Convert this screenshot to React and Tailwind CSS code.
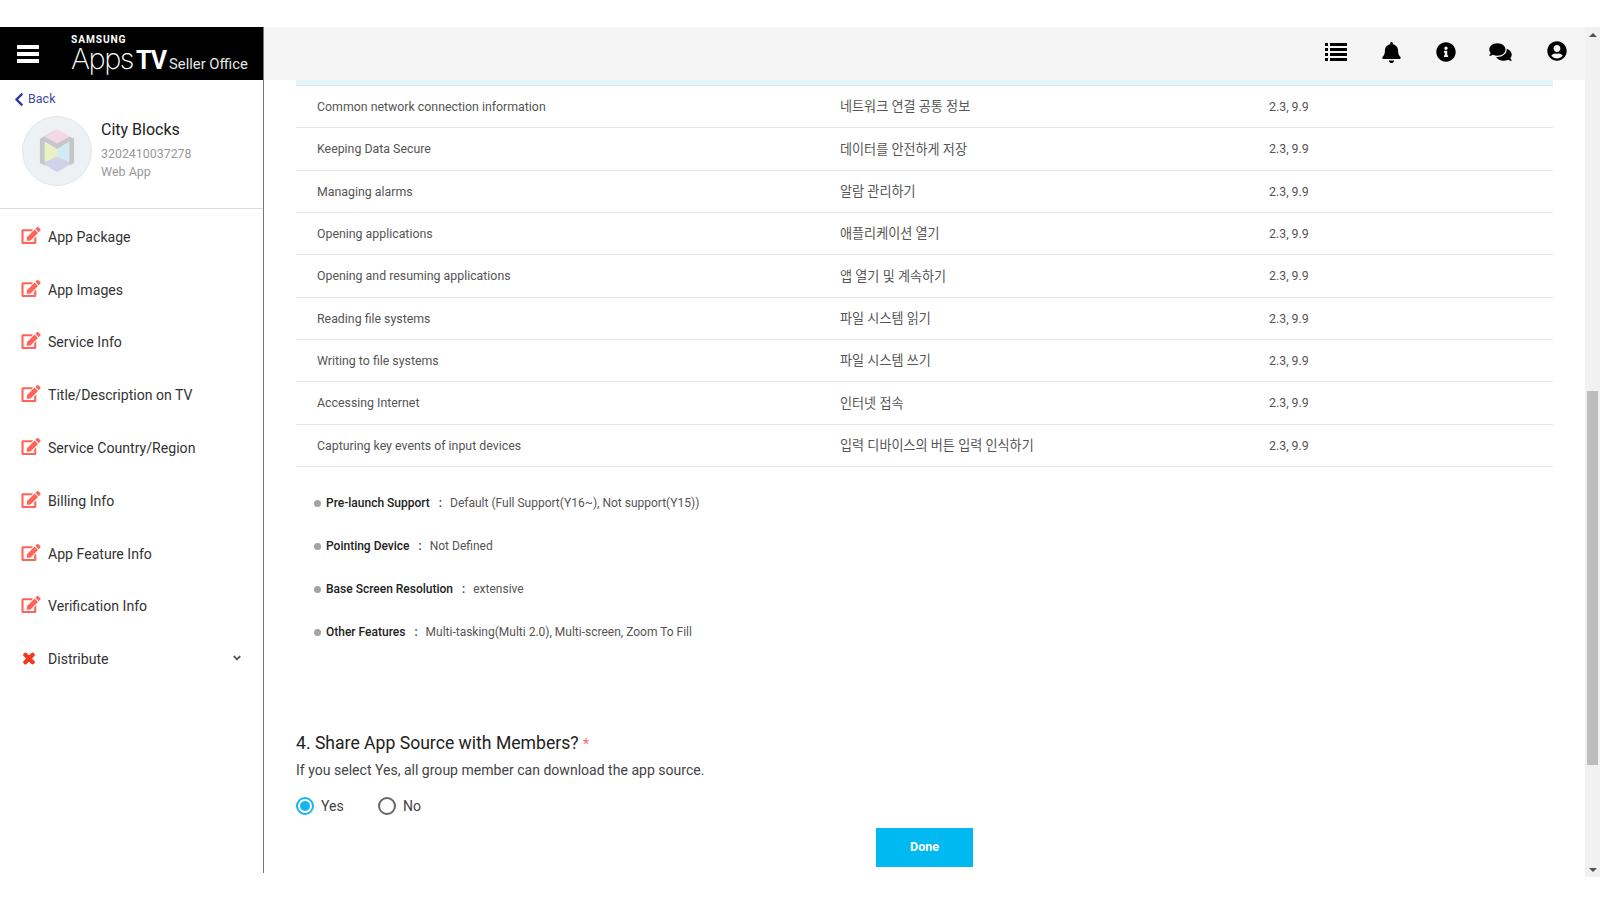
import React from 'react'
import {
    FaBell,
    FaChevronLeft,
    FaComments,
    FaEdit,
    FaInfoCircle,
    FaTimes,
    FaUserCircle,
    FaAngleDown,
} from 'react-icons/fa'

const menuItems = [
    'App Package',
    'App Images',
    'Service Info',
    'Title/Description on TV',
    'Service Country/Region',
    'Billing Info',
    'App Feature Info',
    'Verification Info',
]

const rows = [
    ['Common network connection information', '네트워크 연결 공통 정보'],
    ['Keeping Data Secure', '데이터를 안전하게 저장'],
    ['Managing alarms', '알람 관리하기'],
    ['Opening applications', '애플리케이션 열기'],
    ['Opening and resuming applications', '앱 열기 및 계속하기'],
    ['Reading file systems', '파일 시스템 읽기'],
    ['Writing to file systems', '파일 시스템 쓰기'],
    ['Accessing Internet', '인터넷 접속'],
    ['Capturing key events of input devices', '입력 디바이스의 버튼 입력 인식하기'],
]

const features = [
    ['Pre-launch Support', 'Default (Full Support(Y16~), Not support(Y15))'],
    ['Pointing Device', 'Not Defined'],
    ['Base Screen Resolution', 'extensive'],
    ['Other Features', 'Multi-tasking(Multi 2.0), Multi-screen, Zoom To Fill'],
]

const CubeLogo = () => (
    <svg width="38" height="50" viewBox="0 0 40 48">
        <polygon points="20,1 38,11 20,21 2,11" fill="#f3d9e4" />
        <polygon points="4,13 20,22 20,46 4,37" fill="#e8f0c4" />
        <polygon points="36,13 20,22 20,46 36,37" fill="#d3e9f3" />
        <polygon points="20,30 36,37 20,46 4,37" fill="#cfd3ea" />
        <polygon points="20,1 2,11 2,37 7,39 7,14 20,22 33,14 33,39 38,37 38,11 33,9 20,16 7,9" fill="#c4c7c9" />
    </svg>
)

const ListIcon = () => (
    <svg width="22" height="18" viewBox="0 0 22 18" fill="black">
        <rect x="0" y="0" width="3" height="3" />
        <rect x="0" y="5" width="3" height="3" />
        <rect x="0" y="10" width="3" height="3" />
        <rect x="0" y="15" width="3" height="3" />
        <rect x="5" y="0" width="17" height="3" />
        <rect x="5" y="5" width="17" height="3" />
        <rect x="5" y="10" width="17" height="3" />
        <rect x="5" y="15" width="17" height="3" />
    </svg>
)

const App = () => {
    return (
        <div className="w-[1600px] h-[900px] overflow-hidden bg-white pt-[27px] font-['Roboto',sans-serif]">
            <div className="flex h-[846px]">
                <aside className="w-[264px] shrink-0 border-r border-[#777] flex flex-col">
                    <div className="h-[53px] bg-black flex items-center text-white">
                        <div className="ml-[17px] w-[22px] flex flex-col gap-[3px]">
                            <div className="h-[4px] bg-white"></div>
                            <div className="h-[4px] bg-white"></div>
                            <div className="h-[4px] bg-white"></div>
                        </div>
                        <div className="ml-[32px] -mt-[1px]">
                            <div className="text-[10.2px] font-bold tracking-[0.9px] leading-[11px]">SAMSUNG</div>
                            <div className="flex items-baseline leading-[27px] h-[27px]">
                                <span className="text-[29px] tracking-[-1.5px] font-['Inter',sans-serif] font-extralight">Apps</span>
                                <span className="text-[25px] font-bold ml-[3px] tracking-[-1px]">TV</span>
                                <span className="text-[14.8px] ml-[3px] text-[#e6e6e6]">Seller Office</span>
                            </div>
                        </div>
                    </div>
                    <div className="h-[129px] border-b border-[#dcdcdc] pl-[14px] pt-[10px]">
                        <div className="flex items-center h-[18px] text-[#3c4a9e] text-[12.5px]">
                            <FaChevronLeft className="w-[10px] h-[15px] text-[#2b3aa0]" />
                            <span className="ml-[4px]">Back</span>
                        </div>
                        <div className="flex ml-[8px] mt-[8px]">
                            <div className="w-[70px] h-[70px] rounded-full bg-[#eef1f3] border border-[#e4e6e8] flex items-center justify-center">
                                <CubeLogo />
                            </div>
                            <div className="ml-[9px]">
                                <div className="text-[16px] text-[#222] leading-[22px] mt-[3px]">City Blocks</div>
                                <div className="text-[12.4px] text-[#999] leading-[20px] mt-[3px]">3202410037278</div>
                                <div className="text-[12.5px] text-[#999] leading-[20px] -mt-[2px]">Web App</div>
                            </div>
                        </div>
                    </div>
                    <nav className="pt-[2px]">
                        {menuItems.map((item) => (
                            <div key={item} className="h-[52.8px] flex items-center pl-[21px] text-[14.1px] text-[#333]">
                                <FaEdit className="w-[20px] h-[17px] text-[#ff6458] -mt-[4px]" />
                                <span className="ml-[7px]">{item}</span>
                            </div>
                        ))}
                        <div className="h-[52.8px] flex items-center pl-[22px] pr-[20px] text-[14.1px] text-[#333]">
                            <FaTimes stroke="currentColor" strokeWidth={50} className="w-[14px] h-[15px] text-[#f4391f] mr-[4px] -mt-[2px]" />
                            <span className="ml-[8px] flex-1">Distribute</span>
                            <FaAngleDown className="w-[12px] h-[12px] text-[#555] -mt-[4px]" />
                        </div>
                    </nav>
                </aside>

                <main className="flex-1 min-w-0 flex flex-col">
                    <header className="h-[53px] shrink-0 bg-[#f5f5f5] flex items-center text-black pl-[1061px] pb-[3px]">
                        <ListIcon />
                        <FaBell className="w-[19px] h-[21px] ml-[35px]" />
                        <FaInfoCircle className="w-[20px] h-[20px] ml-[35px]" />
                        <FaComments className="w-[23px] h-[20px] ml-[33px]" />
                        <FaUserCircle className="w-[20px] h-[20px] ml-[35px] -mt-[2px]" />
                    </header>
                    <div className="pl-[32px] pr-[32px]">
                        <div className="h-[6px] bg-[#e3f4fb] border-b border-[#d2e9f2]"></div>
                        {rows.map(([en, ko]) => (
                            <div key={en} className="h-[42.33px] border-b border-[#e6e6e6] flex items-center pl-[21px] pt-[1px] text-[12.35px] text-[#555]">
                                <div className="w-[523px]">{en}</div>
                                <div className="w-[429px] text-[13.1px] font-['Roboto','Noto_Sans_CJK_KR',sans-serif]">{ko}</div>
                                <div>2.3, 9.9</div>
                            </div>
                        ))}
                        <ul className="mt-[14px] pl-[18px]">
                            {features.map(([label, value]) => (
                                <li key={label} className="h-[43.1px] flex items-center text-[12px]">
                                    <span className="w-[7px] h-[7px] rounded-full bg-[#a3a3a3] mt-[2px]"></span>
                                    <span className="ml-[5px] font-medium text-[#222]">{label}</span>
                                    <span className="ml-[9px] mr-[8px] font-medium text-[#333]">:</span>
                                    <span className="text-[#555]">{value}</span>
                                </li>
                            ))}
                        </ul>
                        <h2 className="mt-[78px] text-[17.6px] leading-[24px] text-[#222]">
                            4. Share App Source with Members? <span className="text-[#f66] text-[14px]">*</span>
                        </h2>
                        <p className="mt-[3px] text-[14.05px] leading-[22px] text-[#444]">
                            If you select Yes, all group member can download the app source.
                        </p>
                        <div className="flex items-center mt-[16px] h-[18px] text-[14.05px] text-[#444]">
                            <span className="w-[18px] h-[18px] rounded-full border-2 border-[#16b5f0] flex items-center justify-center">
                                <span className="w-[10px] h-[10px] rounded-full bg-[#16b5f0]"></span>
                            </span>
                            <span className="ml-[7px] w-[57px]">Yes</span>
                            <span className="w-[18px] h-[18px] rounded-full border-2 border-[#666]"></span>
                            <span className="ml-[7px]">No</span>
                        </div>
                        <div className="flex justify-center mt-[13px]">
                            <button className="w-[97px] h-[39px] bg-[#00b9f1] text-white text-[12.5px] font-bold">Done</button>
                        </div>
                    </div>
                </main>

                <div className="w-[15px] h-[850px] shrink-0 bg-[#f1f1f1] flex flex-col items-center">
                    <div className="h-[15px] w-full flex items-center justify-center">
                        <span className="border-x-[4px] border-x-transparent border-b-[4px] border-b-[#505050]"></span>
                    </div>
                    <div className="mt-[349px] h-[374px] w-[11px] bg-[#bdbdbd]"></div>
                    <div className="mt-auto h-[15px] w-full flex items-center justify-center">
                        <span className="border-x-[4px] border-x-transparent border-t-[4px] border-t-[#505050]"></span>
                    </div>
                </div>
            </div>
        </div>
    )
}

export default App
